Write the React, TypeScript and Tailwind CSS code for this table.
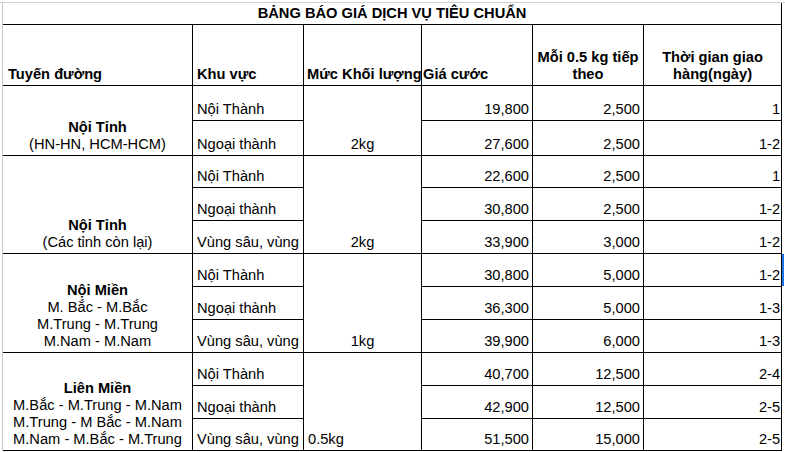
type PriceRow = {
  area: string;
  price: string;
  extra: string;
  days: string;
  h: string;
};

type Group = {
  title: string;
  lines: string[];
  weight: string;
  weightLeft?: boolean;
  rows: PriceRow[];
};

const groups: Group[] = [
  {
    title: "Nội Tỉnh",
    lines: ["(HN-HN, HCM-HCM)"],
    weight: "2kg",
    rows: [
      { area: "Nội Thành", price: "19,800", extra: "2,500", days: "1", h: "h-[35px]" },
      { area: "Ngoại thành", price: "27,600", extra: "2,500", days: "1-2", h: "h-[35px]" },
    ],
  },
  {
    title: "Nội Tỉnh",
    lines: ["(Các tỉnh còn lại)"],
    weight: "2kg",
    rows: [
      { area: "Nội Thành", price: "22,600", extra: "2,500", days: "1", h: "h-[32px]" },
      { area: "Ngoại thành", price: "30,800", extra: "2,500", days: "1-2", h: "h-[33px]" },
      { area: "Vùng sâu, vùng xa", price: "33,900", extra: "3,000", days: "1-2", h: "h-[33px]" },
    ],
  },
  {
    title: "Nội Miền",
    lines: ["M. Bắc - M.Bắc", "M.Trung - M.Trung", "M.Nam - M.Nam"],
    weight: "1kg",
    rows: [
      { area: "Nội Thành", price: "30,800", extra: "5,000", days: "1-2", h: "h-[33px]" },
      { area: "Ngoại thành", price: "36,300", extra: "5,000", days: "1-3", h: "h-[33px]" },
      { area: "Vùng sâu, vùng xa", price: "39,900", extra: "6,000", days: "1-3", h: "h-[33px]" },
    ],
  },
  {
    title: "Liên Miền",
    lines: ["M.Bắc - M.Trung - M.Nam", "M.Trung - M Bắc - M.Nam", "M.Nam - M.Bắc - M.Trung"],
    weight: "0.5kg",
    weightLeft: true,
    rows: [
      { area: "Nội Thành", price: "40,700", extra: "12,500", days: "2-4", h: "h-[33px]" },
      { area: "Ngoại thành", price: "42,900", extra: "12,500", days: "2-5", h: "h-[33px]" },
      { area: "Vùng sâu, vùng xa", price: "51,500", extra: "15,000", days: "2-5", h: "h-[32px]" },
    ],
  },
];

const cell = "border-r border-b border-black align-bottom pb-[2px] leading-[17px]";

export default function App() {
  return (
    <div className="w-[785px] h-[452px] bg-white overflow-hidden text-black text-[14.67px] font-['Liberation_Sans',Arial,sans-serif]">
      <div className="h-[3px] border-b border-[#cfcfcf]" />
      <div className="flex">
        <div className="w-[3px] shrink-0 border-r border-[#c8c8c8]" />
        <table className="table-fixed border-separate border-spacing-0 w-[779px]">
          <colgroup>
            <col className="w-[190px]" />
            <col className="w-[111px]" />
            <col className="w-[118px]" />
            <col className="w-[111px]" />
            <col className="w-[111px]" />
            <col className="w-[138px]" />
          </colgroup>
          <tbody>
            {/* Title */}
            <tr className="h-[22px]">
              <td
                colSpan={6}
                className="border-r border-b border-black text-center font-bold align-middle leading-[17px]"
              >
                BẢNG BÁO GIÁ DỊCH VỤ TIÊU CHUẨN
              </td>
            </tr>

            {/* Header */}
            <tr className="h-[61px] font-bold">
              <td className={`${cell} pl-[5px]`}>Tuyến đường</td>
              <td className={`${cell} pl-[4px]`}>Khu vực</td>
              <td className={`${cell} pl-[3px]`}>
                <div className="whitespace-nowrap">Mức Khối lượng</div>
              </td>
              <td className={`${cell} pl-[1px]`}>Giá cước</td>
              <td className={`${cell} px-[3px] text-center`}>Mỗi 0.5 kg tiếp theo</td>
              <td className={`${cell} px-[10px] text-center`}>Thời gian giao hàng(ngày)</td>
            </tr>

            {groups.map((g, gi) =>
              g.rows.map((r, ri) => (
                <tr key={`${gi}-${ri}`} className={r.h}>
                  {ri === 0 && (
                    <td rowSpan={g.rows.length} className={`${cell} text-center leading-[17.5px]`}>
                      <div className="font-bold">{g.title}</div>
                      {g.lines.map((l) => (
                        <div key={l} className="whitespace-nowrap">
                          {l}
                        </div>
                      ))}
                    </td>
                  )}
                  <td className={`${cell} pl-[4px]`}>
                    <div className="whitespace-nowrap overflow-hidden">{r.area}</div>
                  </td>
                  {ri === 0 && (
                    <td
                      rowSpan={g.rows.length}
                      className={`${cell} ${g.weightLeft ? "text-left pl-[4px]" : "text-center"}`}
                    >
                      {g.weight}
                    </td>
                  )}
                  <td className={`${cell} text-right pr-[3px]`}>{r.price}</td>
                  <td className={`${cell} text-right pr-[3px]`}>{r.extra}</td>
                  <td className={`${cell} text-right pr-[1px] relative`}>
                    {r.days}
                    {gi === 2 && ri === 0 && (
                      <span className="absolute top-0 -right-[3px] w-[2px] h-full bg-[#1a73e8]" />
                    )}
                  </td>
                </tr>
              ))
            )}
          </tbody>
        </table>
      </div>
    </div>
  );
}
